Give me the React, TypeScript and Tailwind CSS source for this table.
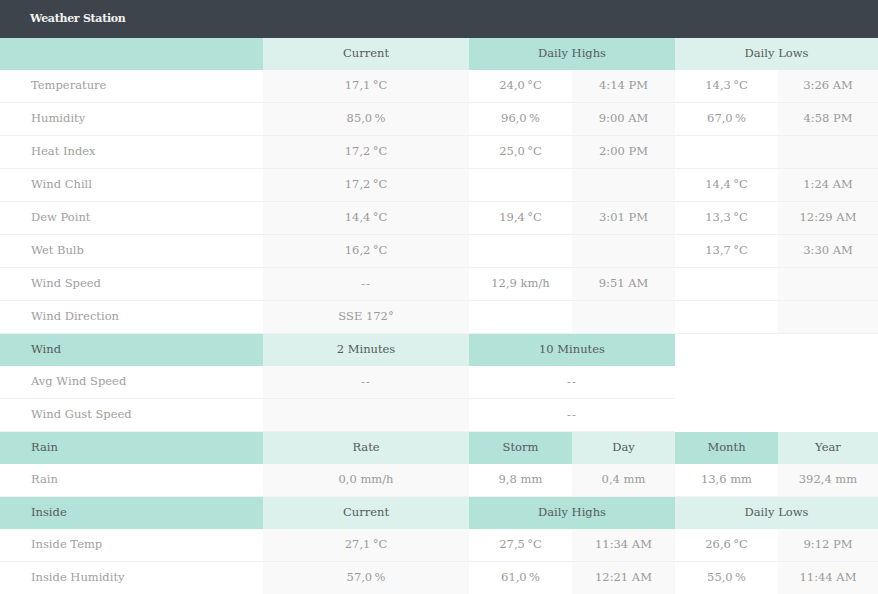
import React from "react";

const STRONG = "bg-[#b3e2d8]";
const LIGHT = "bg-[#dcf1eb]";
const WHITE = "bg-white";
const GRAY = "bg-[#f9f9f9]";

type C = { t?: string; bg: string; span?: number; noBorder?: boolean };

function HeaderRow({ label, cells }: { label: string; cells: C[] }) {
  return (
    <>
      <div className={`${STRONG} h-[32px] flex items-center pl-[31px] text-[#555b5a]`}>{label}</div>
      {cells.map((c, i) => (
        <div
          key={i}
          className={`${c.bg} h-[32px] flex items-center justify-center text-[#555b5a] ${
            c.span === 2 ? "col-span-2" : ""
          }`}
        >
          {c.t}
        </div>
      ))}
    </>
  );
}

function DataRow({ label, cells }: { label: string; cells: C[] }) {
  return (
    <>
      <div className="bg-white h-[33px] flex items-center pl-[31px] text-[#a0a0a0] border-b border-[#f1f1f1]">
        {label}
      </div>
      {cells.map((c, i) => (
        <div
          key={i}
          className={`${c.bg} h-[33px] flex items-center justify-center text-[#9a9a9a] ${
            c.noBorder ? "" : "border-b border-[#f1f1f1]"
          } ${c.span === 2 ? "col-span-2" : ""}`}
        >
          {c.t === "--" ? <span className="tracking-[1px] pt-[2px]">--</span> : c.t}
        </div>
      ))}
    </>
  );
}

const S = "\u2009";
const deg = (v: string) => `${v}${S}°C`;
const pct = (v: string) => `${v}${S}%`;

const std = (cur: string, hv: string, ht: string, lv: string, lt: string): C[] => [
  { t: cur, bg: GRAY },
  { t: hv, bg: WHITE },
  { t: ht, bg: GRAY },
  { t: lv, bg: WHITE },
  { t: lt, bg: GRAY },
];

export default function App() {
  return (
    <div
      className="w-[878px] h-[594px] overflow-hidden bg-white text-[11.5px]"
      style={{ fontFamily: '"DejaVu Serif", "Liberation Serif", serif' }}
    >
      <div className="h-[38px] bg-[#3d444b] flex items-center pl-[30px] text-[#f3f3f3] font-bold text-[11px] tracking-[-0.3px]">
        Weather Station
      </div>
      <div className="grid grid-cols-[263px_206px_103px_103px_103px_100px]">
        <HeaderRow
          label=""
          cells={[
            { t: "Current", bg: LIGHT },
            { t: "Daily Highs", bg: STRONG, span: 2 },
            { t: "Daily Lows", bg: LIGHT, span: 2 },
          ]}
        />
        <DataRow label="Temperature" cells={std(deg("17,1"), deg("24,0"), "4:14 PM", deg("14,3"), "3:26 AM")} />
        <DataRow label="Humidity" cells={std(pct("85,0"), pct("96,0"), "9:00 AM", pct("67,0"), "4:58 PM")} />
        <DataRow label="Heat Index" cells={std(deg("17,2"), deg("25,0"), "2:00 PM", "", "")} />
        <DataRow label="Wind Chill" cells={std(deg("17,2"), "", "", deg("14,4"), "1:24 AM")} />
        <DataRow label="Dew Point" cells={std(deg("14,4"), deg("19,4"), "3:01 PM", deg("13,3"), "12:29 AM")} />
        <DataRow label="Wet Bulb" cells={std(deg("16,2"), "", "", deg("13,7"), "3:30 AM")} />
        <DataRow label="Wind Speed" cells={std("--", "12,9 km/h", "9:51 AM", "", "")} />
        <DataRow label="Wind Direction" cells={std("SSE 172°", "", "", "", "")} />
        <HeaderRow
          label="Wind"
          cells={[
            { t: "2 Minutes", bg: LIGHT },
            { t: "10 Minutes", bg: STRONG, span: 2 },
            { t: "", bg: WHITE, span: 2 },
          ]}
        />
        <DataRow
          label="Avg Wind Speed"
          cells={[
            { t: "--", bg: GRAY },
            { t: "--", bg: WHITE, span: 2 },
            { t: "", bg: WHITE, span: 2, noBorder: true },
          ]}
        />
        <DataRow
          label="Wind Gust Speed"
          cells={[
            { t: "", bg: GRAY },
            { t: "--", bg: WHITE, span: 2 },
            { t: "", bg: WHITE, span: 2, noBorder: true },
          ]}
        />
        <HeaderRow
          label="Rain"
          cells={[
            { t: "Rate", bg: LIGHT },
            { t: "Storm", bg: STRONG },
            { t: "Day", bg: LIGHT },
            { t: "Month", bg: STRONG },
            { t: "Year", bg: LIGHT },
          ]}
        />
        <DataRow
          label="Rain"
          cells={[
            { t: "0,0 mm/h", bg: GRAY },
            { t: "9,8 mm", bg: WHITE },
            { t: "0,4 mm", bg: GRAY },
            { t: "13,6 mm", bg: WHITE },
            { t: "392,4 mm", bg: GRAY },
          ]}
        />
        <HeaderRow
          label="Inside"
          cells={[
            { t: "Current", bg: LIGHT },
            { t: "Daily Highs", bg: STRONG, span: 2 },
            { t: "Daily Lows", bg: LIGHT, span: 2 },
          ]}
        />
        <DataRow label="Inside Temp" cells={std(deg("27,1"), deg("27,5"), "11:34 AM", deg("26,6"), "9:12 PM")} />
        <DataRow label="Inside Humidity" cells={std(pct("57,0"), pct("61,0"), "12:21 AM", pct("55,0"), "11:44 AM")} />
      </div>
    </div>
  );
}
